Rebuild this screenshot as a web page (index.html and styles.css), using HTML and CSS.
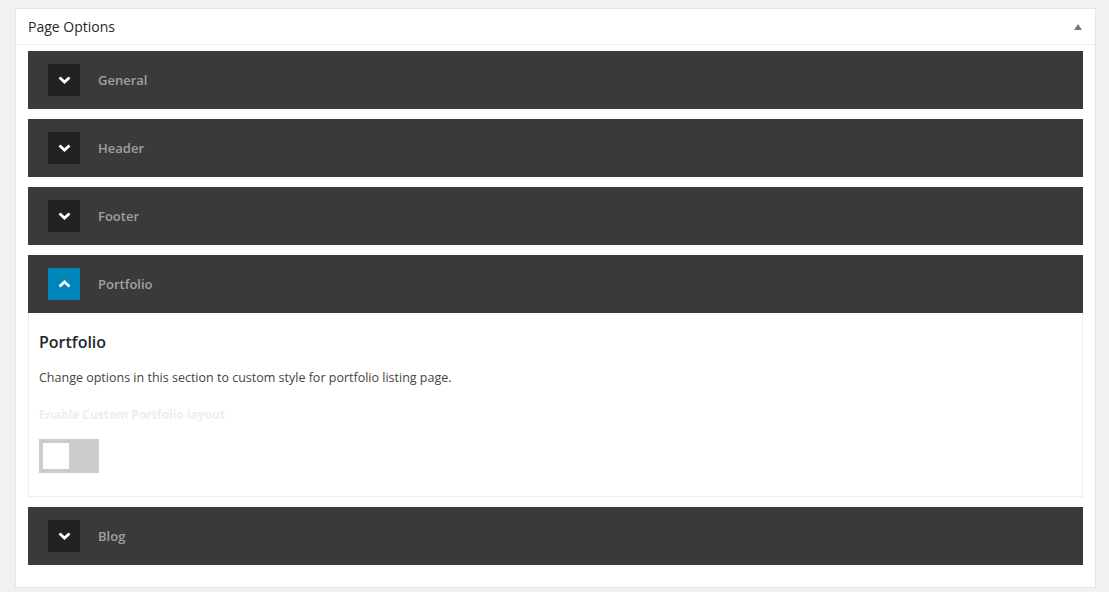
FILE: index.html
```html
<!DOCTYPE html>
<html lang="en">

<head>
    <meta charset="UTF-8">
    <meta name="viewport" content="width=device-width, initial-scale=1.0">
    <title>Page Options</title>
    <link rel="stylesheet" href="styles.css">
</head>

<body>
    <div class="postbox">
        <div class="postbox-header">
            <h2 class="postbox-title">Page Options</h2>
            <span class="toggle-arrow"></span>
        </div>
        <div class="inside">
            <div class="section">
                <div class="section-head">
                    <span class="section-icon">
                        <svg width="13" height="8" viewBox="0 0 13 8"><path d="M1.5 1.5 L6.5 6 L11.5 1.5" fill="none" stroke="#fff" stroke-width="2.8" stroke-linejoin="miter"/></svg>
                    </span>
                    <span class="section-title">General</span>
                </div>
            </div>
            <div class="section">
                <div class="section-head">
                    <span class="section-icon">
                        <svg width="13" height="8" viewBox="0 0 13 8"><path d="M1.5 1.5 L6.5 6 L11.5 1.5" fill="none" stroke="#fff" stroke-width="2.8" stroke-linejoin="miter"/></svg>
                    </span>
                    <span class="section-title">Header</span>
                </div>
            </div>
            <div class="section">
                <div class="section-head">
                    <span class="section-icon">
                        <svg width="13" height="8" viewBox="0 0 13 8"><path d="M1.5 1.5 L6.5 6 L11.5 1.5" fill="none" stroke="#fff" stroke-width="2.8" stroke-linejoin="miter"/></svg>
                    </span>
                    <span class="section-title">Footer</span>
                </div>
            </div>
            <div class="section open">
                <div class="section-head">
                    <span class="section-icon">
                        <svg width="13" height="8" viewBox="0 0 13 8"><path d="M1.5 6.5 L6.5 2 L11.5 6.5" fill="none" stroke="#fff" stroke-width="2.8" stroke-linejoin="miter"/></svg>
                    </span>
                    <span class="section-title">Portfolio</span>
                </div>
                <div class="section-body">
                    <h3>Portfolio</h3>
                    <p class="desc">Change options in this section to custom style for portfolio listing page.</p>
                    <label class="field-label">Enable Custom Portfolio layout</label>
                    <div class="switch">
                        <span class="knob"></span>
                    </div>
                </div>
            </div>
            <div class="section">
                <div class="section-head">
                    <span class="section-icon">
                        <svg width="13" height="8" viewBox="0 0 13 8"><path d="M1.5 1.5 L6.5 6 L11.5 1.5" fill="none" stroke="#fff" stroke-width="2.8" stroke-linejoin="miter"/></svg>
                    </span>
                    <span class="section-title">Blog</span>
                </div>
            </div>
        </div>
    </div>
</body>

</html>
```

FILE: styles.css
```css
* {
    box-sizing: border-box;
    margin: 0;
    padding: 0;
}

body {
    background-color: #f1f1f1;
    font-family: 'Open Sans', 'Noto Sans', Arial, sans-serif;
    padding: 8px 13px 0 15px;
}

/*PANEL*/
.postbox {
    background-color: #ffffff;
    border: 1px solid #e5e5e5;
    box-shadow: 0 1px 1px rgba(0, 0, 0, 0.04);
    width: 1081px;
}

.postbox-header {
    display: flex;
    justify-content: space-between;
    align-items: center;
    height: 36px;
    padding: 0 13px 0 12px;
    border-bottom: 1px solid #eeeeee;
}

.postbox-title {
    font-size: 14px;
    font-weight: 400;
    color: #23282d;
}

.toggle-arrow {
    width: 0;
    height: 0;
    border-left: 4px solid transparent;
    border-right: 4px solid transparent;
    border-bottom: 6px solid #72777c;
    margin-top: 1px;
}

.inside {
    padding: 6px 12px 22px 12px;
    display: flex;
    flex-direction: column;
    gap: 10px;
}

/*SECTIONS*/
.section-head {
    display: flex;
    align-items: center;
    height: 58px;
    padding-left: 20px;
    background-color: #3a3a3a;
}

.section-icon {
    display: flex;
    justify-content: center;
    align-items: center;
    width: 32px;
    height: 32px;
    background-color: #222222;
    margin-right: 18px;
}

.open .section-icon {
    background-color: #0085ba;
}

.section-title {
    font-size: 13px;
    font-weight: 600;
    color: #a0a0a0;
}

.section-body {
    border: 1px solid #eeeeee;
    border-top: none;
    padding: 17px 10px 23px 10px;
}

.section-body h3 {
    font-size: 16px;
    font-weight: 600;
    color: #23282d;
    line-height: 24px;
}

.desc {
    font-size: 12.5px;
    color: #444444;
    margin-top: 15px;
    line-height: 18px;
}

.field-label {
    display: block;
    font-size: 12px;
    font-weight: 700;
    color: #eeeeee;
    margin-top: 19px;
    line-height: 18px;
}

/*SWITCH*/
.switch {
    width: 60px;
    height: 34px;
    background-color: #cccccc;
    padding: 4px;
    margin-top: 15px;
}

.knob {
    display: block;
    width: 26px;
    height: 26px;
    background-color: #ffffff;
}
```
